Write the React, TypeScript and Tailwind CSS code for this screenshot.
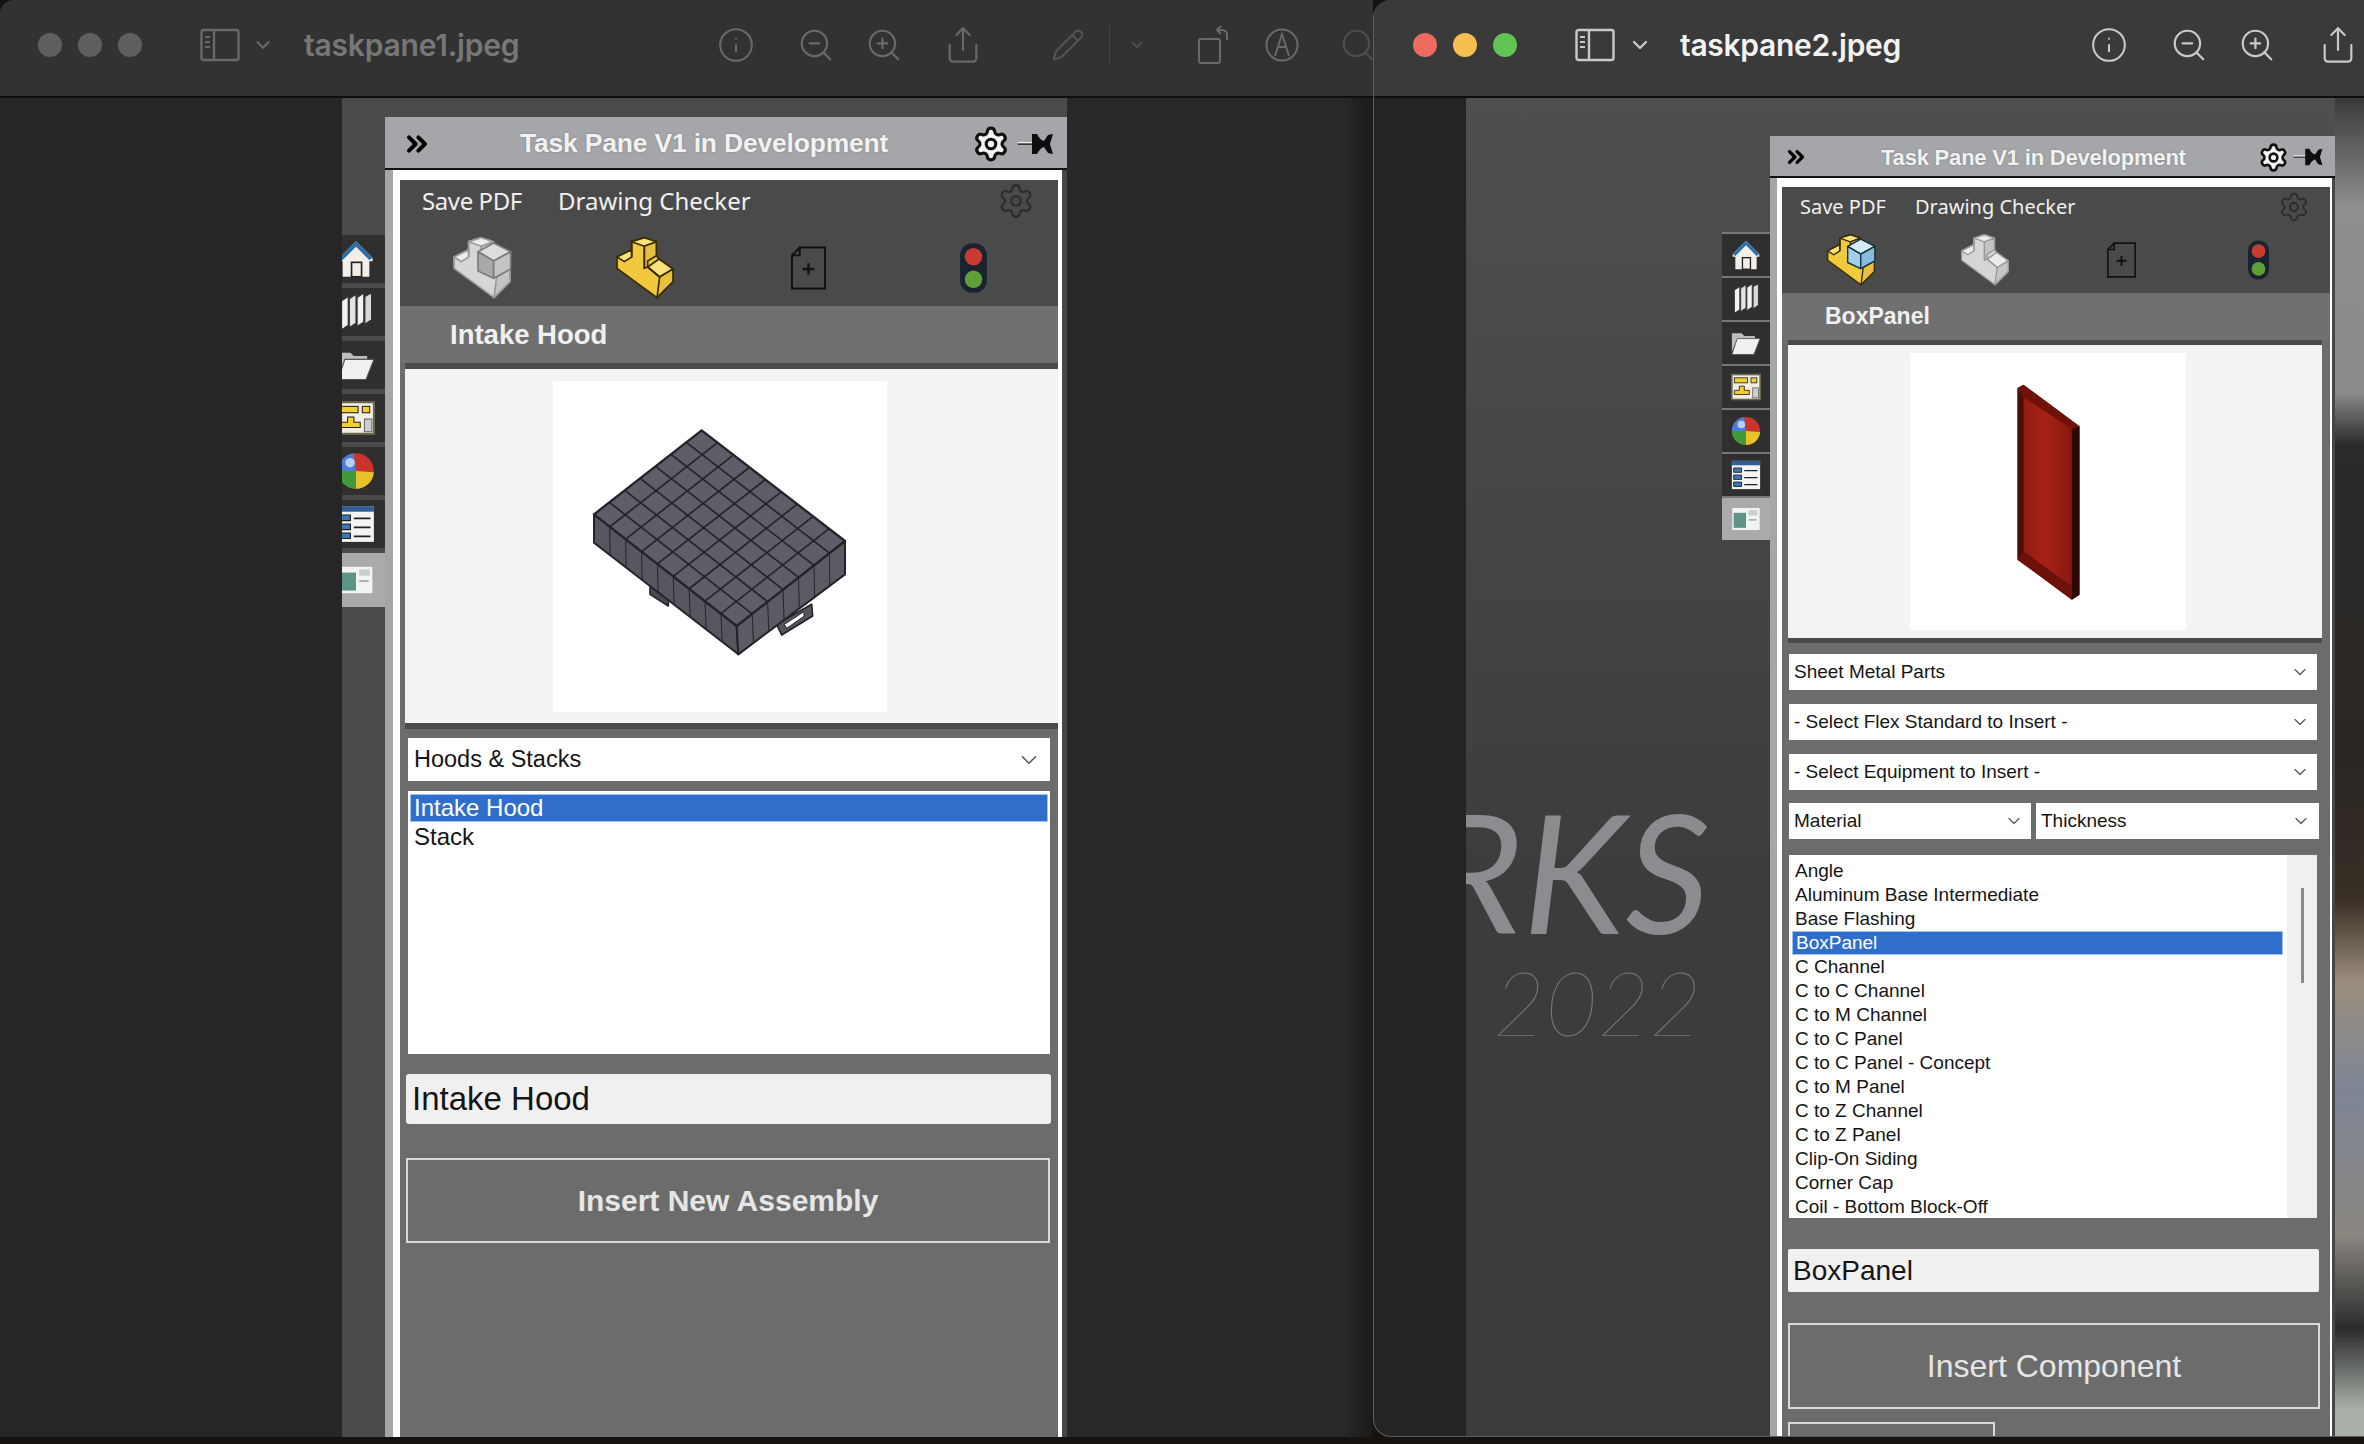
import { ChevronDown, ChevronsRight, Info, Pencil, Search, Settings, Share, ZoomIn, ZoomOut } from 'lucide-react';

const partList = [
  'Angle',
  'Aluminum Base Intermediate',
  'Base Flashing',
  'BoxPanel',
  'C Channel',
  'C to C Channel',
  'C to M Channel',
  'C to C Panel',
  'C to C Panel - Concept',
  'C to M Panel',
  'C to Z Channel',
  'C to Z Panel',
  'Clip-On Siding',
  'Corner Cap',
  'Coil - Bottom Block-Off',
];

function SidebarGlyph({ className }: { className: string }) {
  return (
    <svg viewBox="0 0 40 34" className={className} fill="none">
      <rect x="1.5" y="2" width="37" height="30" rx="2" stroke="currentColor" strokeWidth="2.4" />
      <path d="M14 2v30" stroke="currentColor" strokeWidth="2.4" />
      <path d="M5 9h5M5 14h5M5 19h5" stroke="currentColor" strokeWidth="2" />
    </svg>
  );
}

function RotateGlyph({ className }: { className: string }) {
  return (
    <svg viewBox="0 0 34 38" className={className} fill="none" stroke="currentColor" strokeWidth="2">
      <rect x="3" y="13" width="21" height="24" rx="2" />
      <path d="M31 14V9c0-3-2-5-5-5h-4M25 0l-4 4 4 4" />
    </svg>
  );
}

function MarkupGlyph({ className }: { className: string }) {
  return (
    <svg viewBox="0 0 34 34" className={className} fill="none" stroke="currentColor" strokeWidth="2">
      <circle cx="17" cy="17" r="15.5" />
      <path d="M10 28 17 6l7 22M13 19h8" />
    </svg>
  );
}

function DotRow({ colors }: { colors: string[] }) {
  return (
    <div className="flex gap-[16px]">
      {colors.map((c, i) => (
        <span key={i} className="h-[24px] w-[24px] rounded-full" style={{ backgroundColor: c }} />
      ))}
    </div>
  );
}

function LeftToolbar() {
  return (
    <div className="flex h-[98px] shrink-0 items-center overflow-hidden border-b-2 border-[#0e0e0e] bg-[#323232] pb-[6px] pl-[38px] text-[#696969]">
      <DotRow colors={['#5f5f5f', '#5f5f5f', '#5f5f5f']} />
      <SidebarGlyph className="ml-[58px] h-[34px] w-[40px] shrink-0" />
      <ChevronDown className="ml-[12px] h-[22px] w-[22px] shrink-0" strokeWidth={2.4} />
      <div className="ml-[30px] w-[216px] shrink-0 whitespace-nowrap font-['Inter'] text-[30px] font-semibold tracking-[-0.2px] text-[#777777]">
        taskpane1.jpeg
      </div>
      <Info className="ml-[197px] h-[38px] w-[38px] shrink-0" strokeWidth={1.3} />
      <ZoomOut className="ml-[42px] h-[38px] w-[38px] shrink-0" strokeWidth={1.4} />
      <ZoomIn className="ml-[30px] h-[38px] w-[38px] shrink-0" strokeWidth={1.4} />
      <Share className="ml-[40px] h-[40px] w-[40px] shrink-0" strokeWidth={1.3} />
      <Pencil className="ml-[68px] h-[34px] w-[34px] shrink-0 text-[#555555]" strokeWidth={1.4} />
      <div className="ml-[24px] h-[40px] w-px shrink-0 bg-[#444444]" />
      <ChevronDown className="ml-[18px] h-[18px] w-[18px] shrink-0 text-[#555555]" strokeWidth={2.2} />
      <RotateGlyph className="ml-[50px] h-[38px] w-[34px] shrink-0" />
      <MarkupGlyph className="ml-[35px] h-[34px] w-[34px] shrink-0" />
      <Search className="ml-[40px] h-[38px] w-[38px] shrink-0 text-[#4d4d4d]" strokeWidth={1.4} />
    </div>
  );
}

function RightToolbar() {
  return (
    <div className="flex h-[98px] shrink-0 items-center overflow-hidden border-b-2 border-[#0e0e0e] bg-[#3a3a3a] pb-[6px] pl-[39px] text-[#c9c9c9]">
      <DotRow colors={['#ec6a5e', '#f4bf4f', '#61c554']} />
      <SidebarGlyph className="ml-[58px] h-[34px] w-[40px] shrink-0" />
      <ChevronDown className="ml-[13px] h-[24px] w-[24px] shrink-0" strokeWidth={2.4} />
      <div className="ml-[28px] w-[220px] shrink-0 whitespace-nowrap font-['Inter'] text-[30px] font-semibold tracking-[-0.3px] text-[#f2f2f2]">
        taskpane2.jpeg
      </div>
      <Info className="ml-[190px] h-[38px] w-[38px] shrink-0" strokeWidth={1.3} />
      <ZoomOut className="ml-[42px] h-[38px] w-[38px] shrink-0" strokeWidth={1.4} />
      <ZoomIn className="ml-[30px] h-[38px] w-[38px] shrink-0" strokeWidth={1.4} />
      <Share className="ml-[42px] h-[40px] w-[40px] shrink-0" strokeWidth={1.3} />
    </div>
  );
}

// L shaped part icon from the add-in, yellow when active, optional cube in the corner
function PartIcon({ active, cube, className }: { active?: boolean; cube?: boolean; className: string }) {
  const top = active ? '#f8e27c' : '#ececec';
  const left = active ? '#f0c93c' : '#d6d6d6';
  const right = active ? '#e8c040' : '#c4c4c4';
  const line = active ? '#3a2c00' : '#9a9a9a';
  const cubeTop = active ? '#d4eef9' : '#dddddd';
  const cubeLeft = active ? '#a2cfe8' : '#a9a9a9';
  const cubeRight = active ? '#86bcdc' : '#c4c4c4';
  const cubeLine = active ? '#15303f' : '#7c7c7c';
  return (
    <svg viewBox="0 0 180 190" className={className} stroke={line} strokeWidth="5" strokeLinejoin="round">
      <polygon points="6,62 50,40 50,16 88,4 124,16 124,58 132,68 174,98 174,136 126,184 6,96" fill={left} />
      <polygon points="50,16 88,4 124,16 88,30" fill={top} />
      <polygon points="88,30 124,16 124,58 98,74 98,92 88,96" fill={right} />
      <polygon points="6,62 50,40 50,62 28,76" fill={top} />
      <polygon points="98,92 132,68 174,98 134,122" fill={top} />
      <polygon points="134,122 174,98 174,136 126,184" fill={right} />
      <path d="M50 62V16M88 30V96M98 92l36 30" fill="none" />
      {cube && (
        <g stroke={cubeLine}>
          <polygon points="78,46 125,20 176,46 125,74" fill={cubeTop} />
          <polygon points="78,46 125,74 125,126 78,104" fill={cubeLeft} />
          <polygon points="125,74 176,46 176,98 125,126" fill={cubeRight} />
        </g>
      )}
    </svg>
  );
}

function DocIcon({ className }: { className: string }) {
  return (
    <svg viewBox="0 0 36 44" className={className} fill="none" stroke="#111111" strokeWidth="2">
      <path d="M9 1h26v42H1V9z" fill="#4a4a4a" />
      <path d="M9 1v8H1" />
      <path d="M18 17v12M12 23h12" strokeWidth="2.4" />
    </svg>
  );
}

function TrafficIcon({ className }: { className: string }) {
  return (
    <svg viewBox="0 0 32 52" className={className}>
      <rect x="3" y="2" width="26" height="48" rx="12" fill="#1a2430" />
      <circle cx="16" cy="15" r="8.5" fill="#c93a32" />
      <circle cx="16" cy="37" r="8.5" fill="#5f9f38" />
    </svg>
  );
}

function PinIcon({ className }: { className: string }) {
  return (
    <svg viewBox="0 0 36 22" className={className}>
      <path d="M0 11h15" stroke="#1a1a1a" strokeWidth="1.6" />
      <path d="M0 9.6h15" stroke="#f0f0f0" strokeWidth="1.4" />
      <path d="M14 1v20h5q3-6 7-7l4 6 5 1-3-10 3-10-5 1-4 6q-4-1-7-7z" fill="#0d0d0d" />
    </svg>
  );
}

function TitleBar({ className, textClass, gearClass, pinClass, chevClass }: { className: string; textClass: string; gearClass: string; pinClass: string; chevClass: string }) {
  return (
    <div className={`flex shrink-0 items-center border-b-2 border-[#111111] bg-[#a5a6a9] ${className}`}>
      <ChevronsRight className={`shrink-0 text-black ${chevClass}`} strokeWidth={3} />
      <div className={`whitespace-nowrap font-bold text-[#f2f2f2] [text-shadow:0_0_2px_#77787a] ${textClass}`}>
        Task Pane V1 in Development
      </div>
      <Settings className={`shrink-0 fill-[#f4f4f4] text-[#111111] ${gearClass}`} strokeWidth={2} />
      <PinIcon className={`shrink-0 ${pinClass}`} />
    </div>
  );
}

function Dropdown({ label, className, textClass, chevClass }: { label: string; className: string; textClass: string; chevClass: string }) {
  return (
    <div className={`flex shrink-0 items-center justify-between bg-white text-[#151515] ${className}`}>
      <span className={`whitespace-nowrap ${textClass}`}>{label}</span>
      <ChevronDown className={`shrink-0 text-[#5a5a5a] ${chevClass}`} strokeWidth={1.5} />
    </div>
  );
}

function hoodLerp(a: number[], b: number[], t: number) {
  return [a[0] + (b[0] - a[0]) * t, a[1] + (b[1] - a[1]) * t];
}

// Intake hood thumbnail, coordinates follow the 400x340 preview crop at 3x
function HoodDrawing({ className }: { className: string }) {
  const T = [545, 158];
  const L = [222, 410];
  const R = [975, 490];
  const F = [650, 745];
  const LB = [222, 495];
  const RB = [975, 590];
  const FB = [655, 830];
  const cols = [1, 2, 3, 4, 5, 6, 7, 8].map((n) => n / 9);
  const rows = [1, 2, 3, 4, 5, 6].map((n) => n / 7);
  return (
    <svg viewBox="100 10 1000 993" className={className} stroke="#23242a" strokeLinejoin="round">
      <polygon points="390,625 445,660 445,685 390,650" fill="#4a4b52" strokeWidth="5" />
      <polygon points="770,740 875,680 878,715 785,772" fill="#55565c" strokeWidth="5" />
      <polygon points="793,740 852,702 852,716 800,752" fill="#ffffff" strokeWidth="3" />
      <polygon points={`${L} ${F} ${FB} ${LB}`} fill="#55565e" strokeWidth="6" />
      <polygon points={`${F} ${R} ${RB} ${FB}`} fill="#5a5b63" strokeWidth="6" />
      <polygon points={`${T} ${R} ${F} ${L}`} fill="#5d5e68" strokeWidth="7" />
      {cols.map((t) => {
        const a = hoodLerp(T, R, t);
        const b = hoodLerp(L, F, t);
        const c = hoodLerp(LB, FB, t);
        return (
          <g key={t} strokeWidth="5">
            <line x1={a[0]} y1={a[1]} x2={b[0]} y2={b[1]} />
            <line x1={b[0]} y1={b[1]} x2={c[0]} y2={c[1]} strokeWidth="3" />
          </g>
        );
      })}
      {rows.map((t) => {
        const a = hoodLerp(T, L, t);
        const b = hoodLerp(R, F, t);
        const c = hoodLerp(RB, FB, t);
        return (
          <g key={t} strokeWidth="5">
            <line x1={a[0]} y1={a[1]} x2={b[0]} y2={b[1]} />
            <line x1={b[0]} y1={b[1]} x2={c[0]} y2={c[1]} strokeWidth="3" />
          </g>
        );
      })}
    </svg>
  );
}

function BoxPanelDrawing({ className }: { className: string }) {
  return (
    <svg viewBox="165 132 200 660" className={className}>
      <defs>
        <linearGradient id="panelFace" x1="0" x2="1" y1="0" y2="0">
          <stop offset="0" stopColor="#8a1a10" />
          <stop offset="0.45" stopColor="#a82116" />
          <stop offset="1" stopColor="#7c150d" />
        </linearGradient>
      </defs>
      <polygon points="172,150 190,140 358,265 358,770 335,785 172,665" fill="url(#panelFace)" />
      <polygon points="172,150 190,140 358,265 335,272 190,178" fill="#6e120b" />
      <polygon points="335,272 358,265 358,770 335,785" fill="#2c0705" />
      <polygon points="190,640 335,745 335,785 172,665" fill="#6d120b" />
      <polygon points="172,150 190,178 190,640 172,665" fill="#4d0d08" />
    </svg>
  );
}

function Home({ className }: { className: string }) {
  return (
    <svg viewBox="0 0 32 36" className={className}>
      <path d="M16 2 1 17v3h3v14h24V20h3v-3z" fill="#f3eee7" />
      <path d="M16 2 1 17l3 2L16 7l12 12 3-2z" fill="#2f6fa8" />
      <rect x="12" y="21" width="9" height="13" fill="#f3eee7" stroke="#222222" strokeWidth="1.5" />
    </svg>
  );
}

function Stack({ className }: { className: string }) {
  return (
    <svg viewBox="0 0 32 36" className={className} stroke="#333333" strokeWidth="1">
      <polygon points="3,8 9,4 9,30 3,34" fill="#f2f2f2" />
      <polygon points="10,6 16,2 16,28 10,32" fill="#e4e4e4" />
      <polygon points="17,5 23,1 23,27 17,31" fill="#f2f2f2" />
      <polygon points="24,4 30,1 30,25 24,29" fill="#d9d9d9" />
    </svg>
  );
}

function Folder({ className }: { className: string }) {
  return (
    <svg viewBox="0 0 34 32" className={className}>
      <path d="M1 5h11l3 3h12v4H7L1 26z" fill="#bdbdbd" />
      <polygon points="7,11 33,11 26,29 1,29" fill="#f0f0f0" stroke="#555555" strokeWidth="1" />
    </svg>
  );
}

function Layout({ className }: { className: string }) {
  return (
    <svg viewBox="0 0 36 34" className={className}>
      <rect x="1" y="2" width="34" height="30" fill="#f2efe2" stroke="#6b6650" strokeWidth="2" />
      <rect x="4" y="6" width="16" height="6" fill="#f0cf2e" stroke="#222222" />
      <rect x="24" y="6" width="7" height="6" fill="#f0cf2e" stroke="#222222" />
      <path d="M4 26h18v-5h-6v-5h-6v5H4z" fill="#f0cf2e" stroke="#222222" />
      <rect x="26" y="18" width="7" height="12" fill="#c9ced3" stroke="#666666" />
    </svg>
  );
}

function Ball({ className }: { className: string }) {
  return (
    <svg viewBox="0 0 32 32" className={className}>
      <circle cx="16" cy="16" r="15" fill="#c9352a" />
      <path d="M16 16 1 16a15 15 0 0 1 13-15z" fill="#4a7fd9" />
      <path d="M16 16 1 16a15 15 0 0 0 15 15z" fill="#3f9a3a" />
      <path d="M16 16l15 1a15 15 0 0 1-15 14z" fill="#e6c22b" />
      <circle cx="11" cy="9" r="4" fill="#b9d0f4" />
    </svg>
  );
}

function ListDoc({ className }: { className: string }) {
  return (
    <svg viewBox="0 0 34 34" className={className}>
      <rect x="1" y="1" width="32" height="32" fill="#f4f4f4" />
      <rect x="1" y="1" width="32" height="5" fill="#2f5f95" />
      <path d="M3 9h9v5H3zM3 17h9v5H3zM3 25h9v5H3z" fill="#3a78b8" stroke="#1d1d1d" />
      <path d="M15 12h15M15 20h15M15 28h15" stroke="#222222" strokeWidth="1.5" />
    </svg>
  );
}

function Screen({ className }: { className: string }) {
  return (
    <svg viewBox="0 0 34 28" className={className}>
      <rect x="1" y="1" width="32" height="26" fill="#f2f4f2" stroke="#aaaaaa" />
      <rect x="3" y="7" width="14" height="17" fill="#5d9487" />
      <rect x="20" y="4" width="10" height="6" fill="#c8d0cc" />
      <rect x="20" y="14" width="9" height="2" fill="#aab4af" />
    </svg>
  );
}

function LeftSidebar() {
  const icons = [Home, Stack, Folder, Layout, Ball, ListDoc];
  const Last = Screen;
  return (
    <div className="flex w-[43px] shrink-0 flex-col overflow-hidden bg-[#4a4a4a] pt-[137px]">
      {icons.map((Icon, i) => (
        <div key={i} className="mb-[5px] flex h-[48px] items-center overflow-hidden bg-[#2f2f2f] [&>svg]:ml-[-5px]">
          <Icon className="h-[40px] w-[38px] shrink-0" />
        </div>
      ))}
      <div className="flex h-[54px] items-center overflow-hidden bg-[#aaaaaa] [&>svg]:ml-[-4px]">
        <Last className="h-[34px] w-[36px] shrink-0" />
      </div>
    </div>
  );
}

function RightSidebar() {
  const icons = [Home, Stack, Folder, Layout, Ball, ListDoc];
  const Last = Screen;
  return (
    <div className="ml-[256px] mt-[134px] flex h-[308px] w-[48px] shrink-0 flex-col self-start border-t-2 border-[#777777]">
      {icons.map((Icon, i) => (
        <div key={i} className="flex h-[44px] items-center justify-center border-b-2 border-[#777777] bg-[#2f2f2f]">
          <Icon className="h-[32px] w-[30px]" />
        </div>
      ))}
      <div className="flex h-[42px] items-center justify-center bg-[#aaaaaa]">
        <Last className="h-[26px] w-[30px]" />
      </div>
    </div>
  );
}

function LeftPane() {
  return (
    <div className="mt-[19px] flex w-[682px] shrink-0 flex-col">
      <TitleBar
        className="h-[53px] pl-[16px] pt-[3px]"
        chevClass="h-[32px] w-[32px]"
        textClass="ml-[87px] w-[452px] text-[26.5px] tracking-[-0.2px]"
        gearClass="h-[38px] w-[38px]"
        pinClass="ml-[8px] h-[22px] w-[36px]"
      />
      <div className="flex min-h-0 flex-1 flex-col overflow-hidden border-l-[8px] border-r-[5px] border-l-[#a6a6a6] border-r-[#474747]">
        <div className="flex min-h-0 flex-1 flex-col border-x-[4px] border-l-[7px] border-t-[10px] border-white bg-[#6c6c6c]">
          <div className="flex h-[126px] shrink-0 flex-col bg-[#4a4a4a]">
            <div className="flex h-[42px] items-center pl-[22px] pr-[23px] font-['Noto_Sans'] text-[24px] text-[#f0f0f0]">
              <span className="w-[136px] tracking-[-0.4px]">Save PDF</span>
              <span>Drawing Checker</span>
              <Settings className="ml-auto h-[38px] w-[38px] text-[#2c2c2c]" strokeWidth={1.4} />
            </div>
            <div className="flex flex-1 items-center pl-[52px] pt-[8px]">
              <PartIcon cube className="h-[70px] w-[60px] shrink-0" />
              <PartIcon active className="ml-[103px] h-[64px] w-[60px] shrink-0" />
              <DocIcon className="ml-[116px] h-[44px] w-[35px] shrink-0" />
              <TrafficIcon className="ml-[131px] h-[54px] w-[33px] shrink-0" />
            </div>
          </div>
          <div className="flex h-[57px] shrink-0 items-center bg-[#707070] pl-[50px] text-[27.5px] font-bold text-[#f0f0f0]">
            Intake Hood
          </div>
          <div className="ml-[5px] flex h-[366px] shrink-0 flex-col border-y-[6px] border-[#4a4a4a] bg-[#f3f3f3]">
            <div className="my-[12px] ml-[148px] flex w-[334px] flex-1 items-center justify-center bg-white">
              <HoodDrawing className="h-[331px] w-[334px]" />
            </div>
          </div>
          <div className="ml-[8px] mt-[9px] flex w-[642px] flex-1 flex-col">
            <Dropdown
              label="Hoods & Stacks"
              className="h-[43px] pl-[6px] pr-[8px]"
              textClass="text-[23.5px]"
              chevClass="h-[26px] w-[26px]"
            />
            <div className="mt-[10px] h-[263px] shrink-0 bg-white px-[2px] pt-[3px] text-[24px]">
              <div className="flex h-[28px] items-center border border-[#9cc3f0] bg-[#2f6fcb] pl-[3px] text-white">Intake Hood</div>
              <div className="flex h-[29px] items-center pl-[4px] text-[#151515]">Stack</div>
            </div>
            <div className="ml-[-2px] mt-[20px] flex h-[50px] w-[645px] shrink-0 items-center rounded-[3px] bg-[#f0f0f0] pl-[6px] text-[33px] text-[#151515]">
              Intake Hood
            </div>
            <div className="ml-[-2px] mt-[34px] flex h-[85px] w-[644px] shrink-0 items-center justify-center border-2 border-[#d9d9d9] text-[30px] font-bold text-[#e6e6e6]">
              Insert New Assembly
            </div>
          </div>
        </div>
      </div>
    </div>
  );
}

function RightPane() {
  return (
    <div className="mt-[38px] flex w-[565px] shrink-0 flex-col">
      <TitleBar
        className="h-[42px] pl-[13px] pt-[2px]"
        chevClass="h-[26px] w-[26px]"
        textClass="ml-[72px] w-[377px] text-[22px] tracking-[-0.2px]"
        gearClass="h-[31px] w-[31px]"
        pinClass="ml-[4px] h-[18px] w-[31px]"
      />
      <div className="flex min-h-0 flex-1 flex-col overflow-hidden border-l-[7px] border-r-[3px] border-l-[#a6a6a6] border-r-[#474747]">
        <div className="flex min-h-0 flex-1 flex-col border-x-[2px] border-l-[5px] border-t-[9px] border-white bg-[#6c6c6c]">
          <div className="flex h-[106px] shrink-0 flex-col bg-[#4a4a4a]">
            <div className="flex h-[40px] items-center pl-[18px] pr-[20px] font-['Noto_Sans'] text-[20px] text-[#f0f0f0]">
              <span className="w-[115px]">Save PDF</span>
              <span>Drawing Checker</span>
              <Settings className="ml-auto h-[32px] w-[32px] text-[#2c2c2c]" strokeWidth={1.4} />
            </div>
            <div className="flex flex-1 items-center pl-[44px]">
              <PartIcon active cube className="h-[54px] w-[50px] shrink-0" />
              <PartIcon className="ml-[84px] h-[56px] w-[50px] shrink-0" />
              <DocIcon className="ml-[97px] h-[36px] w-[29px] shrink-0" />
              <TrafficIcon className="ml-[109px] h-[42px] w-[27px] shrink-0" />
            </div>
          </div>
          <div className="flex h-[47px] shrink-0 items-center bg-[#707070] pl-[43px] text-[23px] font-bold text-[#f0f0f0]">
            BoxPanel
          </div>
          <div className="ml-[6px] mr-[8px] flex h-[303px] shrink-0 flex-col border-y-[5px] border-[#4a4a4a] bg-[#f3f3f3]">
            <div className="my-[8px] ml-[122px] flex w-[276px] flex-1 items-center justify-center bg-white">
              <BoxPanelDrawing className="h-[220px] w-[67px]" />
            </div>
          </div>
          <div className="ml-[7px] mt-[11px] flex w-[528px] flex-1 flex-col">
            <Dropdown label="Sheet Metal Parts" className="h-[36px] pl-[5px] pr-[7px]" textClass="text-[19px]" chevClass="h-[20px] w-[20px]" />
            <Dropdown label="- Select Flex Standard to Insert -" className="mt-[14px] h-[36px] pl-[5px] pr-[7px]" textClass="text-[19px]" chevClass="h-[20px] w-[20px]" />
            <Dropdown label="- Select Equipment to Insert -" className="mt-[14px] h-[36px] pl-[5px] pr-[7px]" textClass="text-[19px]" chevClass="h-[20px] w-[20px]" />
            <div className="mt-[13px] flex h-[36px] w-[530px] shrink-0 gap-[5px]">
              <Dropdown label="Material" className="h-[36px] w-[242px] pl-[5px] pr-[7px]" textClass="text-[19px]" chevClass="h-[20px] w-[20px]" />
              <Dropdown label="Thickness" className="h-[36px] w-[283px] pl-[5px] pr-[8px]" textClass="text-[19px]" chevClass="h-[20px] w-[20px]" />
            </div>
            <div className="mt-[16px] flex h-[363px] shrink-0 bg-white">
              <div className="flex-1 pl-[3px] pt-[4px] text-[19px] text-[#151515]">
                {partList.map((name) =>
                  name === 'BoxPanel' ? (
                    <div key={name} className="mr-[4px] flex h-[24px] items-center border border-[#9cc3f0] bg-[#2f6fcb] pl-[3px] text-white">{name}</div>
                  ) : (
                    <div key={name} className="flex h-[24px] items-center pl-[3px]">{name}</div>
                  ),
                )}
              </div>
              <div className="w-[30px] shrink-0 bg-[#f0f0f0] pt-[33px]">
                <div className="mx-auto h-[95px] w-[3px] bg-[#8a8a8a]" />
              </div>
            </div>
            <div className="ml-[-1px] mt-[31px] flex h-[43px] w-[531px] shrink-0 items-center rounded-[2px] bg-[#f0f0f0] pl-[5px] text-[28px] text-[#151515]">
              BoxPanel
            </div>
            <div className="ml-[-1px] mt-[31px] flex h-[86px] w-[532px] shrink-0 items-center justify-center border-2 border-[#d9d9d9] text-[32px] text-[#e6e6e6]">
              Insert Component
            </div>
            <div className="ml-[-1px] mt-[13px] h-[30px] w-[207px] shrink-0 border-2 border-[#d9d9d9]" />
          </div>
        </div>
      </div>
    </div>
  );
}

export default function App() {
  return (
    <div className="flex h-[1444px] w-[2364px] flex-col overflow-hidden bg-[#17120d] font-['Liberation_Sans',Arial,sans-serif]">
      <div className="flex h-[1437px] shrink-0">
        <div className="flex w-[1373px] shrink-0 flex-col overflow-hidden rounded-tl-[14px] bg-[#262626]">
          <LeftToolbar />
          <div className="flex min-h-0 flex-1">
            <div className="w-[342px] shrink-0" />
            <div className="flex w-[725px] shrink-0 bg-[#4a4a4a]">
              <LeftSidebar />
              <LeftPane />
            </div>
            <div className="flex-1 bg-[linear-gradient(to_right,#282828_90%,#1a1a1a)]" />
          </div>
        </div>
        <div className="flex min-w-0 flex-1 flex-col overflow-hidden rounded-l-[18px] border-b border-l border-[#5c5c5c] bg-[#242424]">
          <RightToolbar />
          <div className="flex min-h-0 flex-1">
            <div className="w-[92px] shrink-0" />
            <div className="relative flex min-w-0 flex-1 overflow-hidden bg-[linear-gradient(to_bottom,#4f4f4f,#3c3c3c_60%)]">
              <div className="absolute left-[-40px] top-[706px] font-['Lato'] text-[166px] italic leading-[0.8] text-[#8b8c8f]">RKS</div>
              <div className="absolute left-[27px] top-[867px] font-['Lato'] text-[90px] font-thin italic leading-[0.8] text-[#777879]">2022</div>
              <RightSidebar />
              <RightPane />
            </div>
            <div className="w-[29px] shrink-0 bg-[linear-gradient(to_bottom,#3a3a3a,#8e8e8e_8%,#8a8a8a_22%,#2a2a2a_26%,#2a2622_50%,#3a3026_60%,#9a8d7c_66%,#7e8696_74%,#8a8680_85%,#2c2c2c_92%,#a8b0a8_98%)]" />
          </div>
        </div>
      </div>
    </div>
  );
}
